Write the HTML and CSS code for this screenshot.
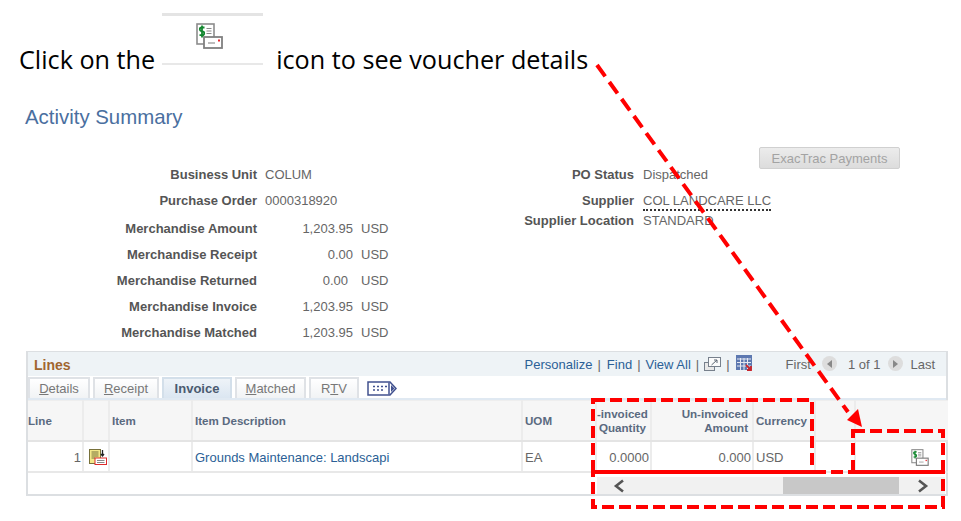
FILE: index.html
```html
<!DOCTYPE html>
<html lang="en">
<head>
  <meta charset="UTF-8" />
  <title>Activity Summary</title>
  <link rel="stylesheet" href="styles.css">
</head>
<body>

  <!-- shared voucher icon -->
  <svg class="defs" width="0" height="0">
    <symbol id="voucherIcon" viewBox="0 0 27 26">
      <rect x="1" y="1" width="17" height="20" fill="#fff" stroke="#8c8c8c" stroke-width="1.6"/>
      <path d="M8.500 4.500H5.500Q3.800 4.500 3.800 6.300T5.500 8.300H6.500Q8.200 8.300 8.200 10.200T6.500 12.200H3.500M6 2.500V14.500" fill="none" stroke="#13872f" stroke-width="1.800"/>
      <path d="M10.500 5.500H15.500M10.500 8H15.500M10.500 10.500H15.500" stroke="#8a8a8a" stroke-width="1.200"/>
      <rect x="8" y="14" width="18" height="11" fill="#fff" stroke="#808080" stroke-width="1.800"/>
      <path d="M12 20H19" stroke="#bdbdbd" stroke-width="2"/>
      <rect x="22" y="16.500" width="2" height="2" fill="#e8262c"/>
    </symbol>
  </svg>

  <!-- instruction line -->
  <div class="intro">
    <span>Click on the</span>
    <div class="intro-thumb">
      <svg class="icon-lg"><use href="#voucherIcon"/></svg>
    </div>
    <span>icon to see voucher details</span>
  </div>

  <h1 class="page-title">Activity Summary</h1>

  <!-- summary fields -->
  <div class="summary">
    <div class="summary-left">
      <div class="row"><span class="lbl">Business Unit</span><span class="val">COLUM</span></div>
      <div class="row"><span class="lbl">Purchase Order</span><span class="val">0000318920</span></div>
      <div class="row row-amt-first"><span class="lbl">Merchandise Amount</span><span class="amt">1,203.95</span><span class="cur">USD</span></div>
      <div class="row"><span class="lbl">Merchandise Receipt</span><span class="amt">0.00</span><span class="cur">USD</span></div>
      <div class="row"><span class="lbl">Merchandise Returned</span><span class="amt amt-short">0.00</span><span class="cur">USD</span></div>
      <div class="row"><span class="lbl">Merchandise Invoice</span><span class="amt">1,203.95</span><span class="cur">USD</span></div>
      <div class="row"><span class="lbl">Merchandise Matched</span><span class="amt">1,203.95</span><span class="cur">USD</span></div>
    </div>
    <div class="summary-right">
      <button class="btn-disabled">ExacTrac Payments</button>
      <div class="row row-right"><span class="lbl">PO Status</span><span class="val">Dispatched</span></div>
      <div class="row row-right"><span class="lbl">Supplier</span><span class="val val-dotted">COL LANDCARE LLC</span></div>
      <div class="row row-right row-tight"><span class="lbl">Supplier Location</span><span class="val">STANDARD</span></div>
    </div>
  </div>

  <!-- lines grid -->
  <div class="lines">
    <div class="lines-bar">
      <span class="lines-title">Lines</span>
      <div class="lines-nav">
        <a class="link">Personalize</a><span class="sep">|</span>
        <a class="link">Find</a><span class="sep sep-tight">|</span>
        <a class="link">View All</a><span class="sep sep-tight">|</span>
        <svg class="nav-icon" viewBox="0 0 17 15">
          <rect x="0.500" y="5.500" width="10" height="8" fill="#e8e8e8" stroke="#77808c"/>
          <rect x="4.500" y="0.500" width="12" height="9" fill="#fbfbfb" stroke="#77808c"/>
          <path d="M7.500 8L13 3M10 3H13V6" fill="none" stroke="#5c6773" stroke-width="1"/>
        </svg>
        <span class="sep">|</span>
        <svg class="nav-icon nav-grid" viewBox="0 0 17 17">
          <rect width="16" height="15" fill="#5d78b0"/>
          <path d="M1 4H15M1 7.500H15M1 11H15M4.500 3V15M8 3V15M11.500 3V15" stroke="#e6e9f2" stroke-width="1"/>
          <path d="M10 10L15 15M15 11V15H11" fill="none" stroke="#c9252c" stroke-width="1.800"/>
        </svg>
        <span class="first">First</span>
        <span class="circle circle-prev"><i class="tri-left"></i></span>
        <span class="count">1 of 1</span>
        <span class="circle circle-next"><i class="tri-right"></i></span>
        <span class="last">Last</span>
      </div>
    </div>

    <div class="tabs">
      <span class="tab"><u>D</u>etails</span>
      <span class="tab"><u>R</u>eceipt</span>
      <span class="tab tab-active">Invoice</span>
      <span class="tab"><u>M</u>atched</span>
      <span class="tab">R<u>T</u>V</span>
      <svg class="tab-more" viewBox="0 0 30 15">
        <path d="M1 1H23L29 7.500L23 14H1Z" fill="#fff" stroke="#41518f" stroke-width="1.500"/>
        <path d="M22 1.500V13.500" stroke="#41518f" stroke-width="1.500"/>
        <path d="M24 4L27.500 7.500L24 11Z" fill="#41518f"/>
        <path d="M6 5.500H8M10 5.500H12M14 5.500H16M18 5.500H20M6 9H8M10 9H12M14 9H16" stroke="#41518f" stroke-width="1.500"/>
      </svg>
    </div>

    <table class="grid">
      <colgroup>
        <col class="c-line"><col class="c-icon"><col class="c-item"><col class="c-desc"><col class="c-uom">
        <col class="c-qty"><col class="c-amt"><col class="c-cur"><col class="c-blank"><col class="c-last">
      </colgroup>
      <thead>
        <tr>
          <th class="th-line">Line</th>
          <th></th>
          <th>Item</th>
          <th>Item Description</th>
          <th>UOM</th>
          <th class="num th-qty">-invoiced<br>Quantity</th>
          <th class="num">Un-invoiced<br>Amount</th>
          <th>Currency</th>
          <th></th>
          <th></th>
        </tr>
      </thead>
      <tbody>
        <tr>
          <td class="num">1</td>
          <td class="icon-cell">
            <svg class="row-icon" viewBox="0 0 18 16">
              <rect x="0.500" y="0.500" width="11" height="14" fill="#f3e88a" stroke="#77703a"/>
              <path d="M2.500 3H9.500M2.500 5H9.500M2.500 7H9.500M2.500 9H6" stroke="#77703a"/>
              <path d="M13.500 1V7M12 5L13.500 7L15 5" fill="none" stroke="#222" stroke-width="1.300"/>
              <rect x="6" y="9" width="11.500" height="6.500" fill="#fff" stroke="#dc2b2b"/>
              <path d="M8 11.500H15.500M8 13.500H15.500" stroke="#888"/>
            </svg>
          </td>
          <td></td>
          <td><a class="link">Grounds Maintenance: Landscapi</a></td>
          <td>EA</td>
          <td class="num">0.0000</td>
          <td class="num">0.000</td>
          <td>USD</td>
          <td></td>
          <td class="voucher-cell"><svg class="icon-sm"><use href="#voucherIcon"/></svg></td>
        </tr>
      </tbody>
    </table>

    <div class="scroll-row">
      <div class="scrollbar">
        <svg class="chev" viewBox="0 0 12 14"><path d="M10 1.500L3 7L10 12.500" fill="none" stroke="#555" stroke-width="2.600"/></svg>
        <div class="thumb"></div>
        <svg class="chev" viewBox="0 0 12 14"><path d="M2 1.500L9 7L2 12.500" fill="none" stroke="#555" stroke-width="2.600"/></svg>
      </div>
    </div>
  </div>

  <!-- red callouts drawn on top of the screenshot -->
  <svg class="callouts" viewBox="0 0 961 521">
    <g fill="none" stroke="#f00" stroke-width="4">
      <path stroke-dasharray="14 7" d="M597 65L848 412"/>
      <rect stroke-dasharray="12 5" x="593" y="400" width="219" height="72"/>
      <rect stroke-dasharray="12 5" x="853" y="431" width="90" height="41"/>
      <rect stroke-dasharray="12 5" x="593" y="472" width="350" height="35"/>
    </g>
    <path d="M847 420L862 427L858 409Z" fill="#f00"/>
  </svg>

</body>
</html>
```

FILE: styles.css
```css
body {
  margin: 0;
  width: 961px;
  height: 521px;
  overflow: hidden;
  position: relative;
  background: #fff;
  color: #666;
  font-family: "Liberation Sans", Arial, sans-serif;
  font-size: 13px;
}
.defs {
  position: absolute;
}

/* Instruction line */
.intro {
  display: flex;
  align-items: flex-start;
  gap: 7px;
  padding: 13px 0 0 19px;
  height: 52px;
  color: #000;
  font-family: "Open Sans", sans-serif;
  font-size: 25.200px;
}
.intro span {
  margin-top: 29px;
  line-height: 34px;
}
.intro-thumb {
  width: 101px;
  height: 52px;
  box-sizing: border-box;
  border-top: 3px solid #e4e4e4;
  border-bottom: 2px solid #e8e8e8;
  text-align: center;
  margin-right: 6px;
}
.icon-lg {
  width: 27px;
  height: 26px;
  margin: 7px 0 0 -6px;
}

.page-title {
  margin: 39px 0 0 25px;
  color: #4a6f9f;
  font-size: 20.400px;
  font-weight: normal;
  line-height: 26px;
}

/* Summary fields */
.summary {
  display: flex;
  margin-top: 16px;
}
.summary-left {
  width: 500px;
  padding-top: 16px;
}
.row {
  display: flex;
  height: 26px;
  line-height: 26px;
}
.row-amt-first {
  margin-top: 2px;
}
.lbl {
  width: 257px;
  text-align: right;
  font-weight: bold;
  color: #555;
}
.val {
  margin-left: 8px;
}
.amt {
  width: 96px;
  text-align: right;
}
.amt-short {
  width: 91px;
  margin-right: 5px;
}
.cur {
  margin-left: 8px;
}
.summary-right {
  flex: 1;
}
.btn-disabled {
  display: block;
  margin: 1px 0 -7px 259px;
  width: 141px;
  height: 22px;
  padding: 0;
  border: 1px solid #d0d0d0;
  border-radius: 2px;
  background: linear-gradient(#ececec, #dcdcdc);
  color: #a3a3a3;
  font-family: inherit;
  font-size: 13px;
  font-weight: normal;
}
.row-right .lbl {
  width: 134px;
}
.row-right .val {
  margin-left: 9px;
}
.row-tight {
  height: 20px;
  margin-top: -6px;
}
.val-dotted {
  height: 21px;
  border-bottom: 2px dotted #333;
  line-height: 26px;
}

/* Lines grid */
.lines {
  margin: 5px 0 0 26px;
  width: 922px;
  height: 145px;
  box-sizing: border-box;
  border: 2px solid #dcdfe2;
  border-top-width: 1px;
}
.lines-bar {
  display: flex;
  align-items: center;
  justify-content: space-between;
  height: 24px;
  box-sizing: border-box;
  padding: 1px 11px 0 6px;
  background: #eef3f6;
}
.lines-title {
  color: #a1662f;
  font-size: 14px;
  font-weight: bold;
}
.lines-nav {
  display: flex;
  align-items: center;
}
.link {
  color: #2b5f96;
}
.sep {
  margin: 0 6px 0 5px;
}
.sep-tight {
  margin-right: 5px;
}
.nav-icon {
  width: 17px;
  height: 15px;
}
.nav-grid {
  height: 17px;
  margin: -2px 33px 0 0;
}
.circle {
  width: 15px;
  height: 15px;
  margin-top: -2px;
  border-radius: 50%;
  background: #ddd;
  display: flex;
  align-items: center;
  justify-content: center;
}
.circle-prev {
  margin-left: 11px;
  margin-right: 11px;
}
.circle-next {
  margin-left: 8px;
  margin-right: 7px;
}
.tri-left {
  border: 4px solid transparent;
  border-left: 0;
  border-right: 5px solid #888;
}
.tri-right {
  border: 4px solid transparent;
  border-right: 0;
  border-left: 5px solid #888;
}

.tabs {
  display: flex;
  align-items: flex-end;
  gap: 3px;
  height: 22px;
  border-bottom: 2px solid #e0e9f2;
}
.tab {
  height: 21px;
  line-height: 20px;
  box-sizing: border-box;
  border: 2px solid #dfe2e6;
  border-bottom: 0;
  background: linear-gradient(#fff, #f1f3f5);
  color: #777;
  text-align: center;
}
.tab:nth-child(1) { width: 62px; }
.tab:nth-child(2) { width: 66px; }
.tab:nth-child(3) { width: 70px; }
.tab:nth-child(4) { width: 71px; }
.tab:nth-child(5) { width: 50px; }
.tab-active {
  background: linear-gradient(#eef3f8, #dbe6f1);
  border-color: #d3dfea;
  color: #4a5a70;
  font-weight: bold;
}
.tab-more {
  width: 30px;
  height: 15px;
  margin: 0 0 2px 5px;
}

.grid {
  table-layout: fixed;
  width: 920px;
  border-collapse: collapse;
}
.c-line { width: 55px; }
.c-icon { width: 26px; }
.c-item { width: 83px; }
.c-desc { width: 330px; }
.c-uom { width: 74px; }
.c-qty { width: 55px; }
.c-amt { width: 102px; }
.c-cur { width: 62px; }
.c-blank { width: 40px; }
.c-last { width: 93px; }
.grid th {
  height: 39px;
  padding: 0 2px;
  background: #f6f6f6;
  border-right: 2px solid #ececec;
  border-bottom: 2px solid #e4e4e4;
  border-top: 1px solid #eee;
  color: #5a6a80;
  font-size: 11.600px;
  line-height: 14px;
  text-align: left;
  white-space: nowrap;
  overflow: hidden;
}
.grid th.th-line {
  padding-left: 0;
}
.grid th.num {
  padding-right: 4px;
  text-align: right;
}
.grid th.th-qty {
  padding-left: 0;
}
.grid td {
  height: 28px;
  padding: 1px 2px 0;
  border-right: 2px solid #ececec;
  border-bottom: 2px solid #e8e8e8;
  white-space: nowrap;
  overflow: hidden;
}
.grid td.num {
  padding-right: 1px;
  text-align: right;
}
.grid th:last-child,
.grid td:last-child {
  border-right: 0;
}
.grid td.icon-cell {
  padding-left: 5px;
  font-size: 0;
}
.row-icon {
  width: 18px;
  height: 16px;
  vertical-align: middle;
}
.grid td.voucher-cell {
  padding-right: 19px;
  text-align: right;
  font-size: 0;
}
.icon-sm {
  width: 18px;
  height: 17px;
  vertical-align: middle;
}

.scroll-row {
  display: flex;
  justify-content: flex-end;
  height: 18px;
  padding-top: 4px;
}
.scrollbar {
  width: 348px;
  height: 17px;
  margin-right: 1px;
  background: #f1f1f1;
  display: flex;
  align-items: center;
}
.chev {
  width: 12px;
  height: 14px;
  margin: 0 10px 0 16px;
}
.thumb {
  width: 116px;
  height: 17px;
  margin-left: 148px;
  background: #c8c8c8;
}
.thumb + .chev {
  margin: 0 0 0 18px;
}

/* Red annotation overlay */
.callouts {
  position: absolute;
  top: 0;
  left: 0;
  width: 961px;
  height: 521px;
}
```
